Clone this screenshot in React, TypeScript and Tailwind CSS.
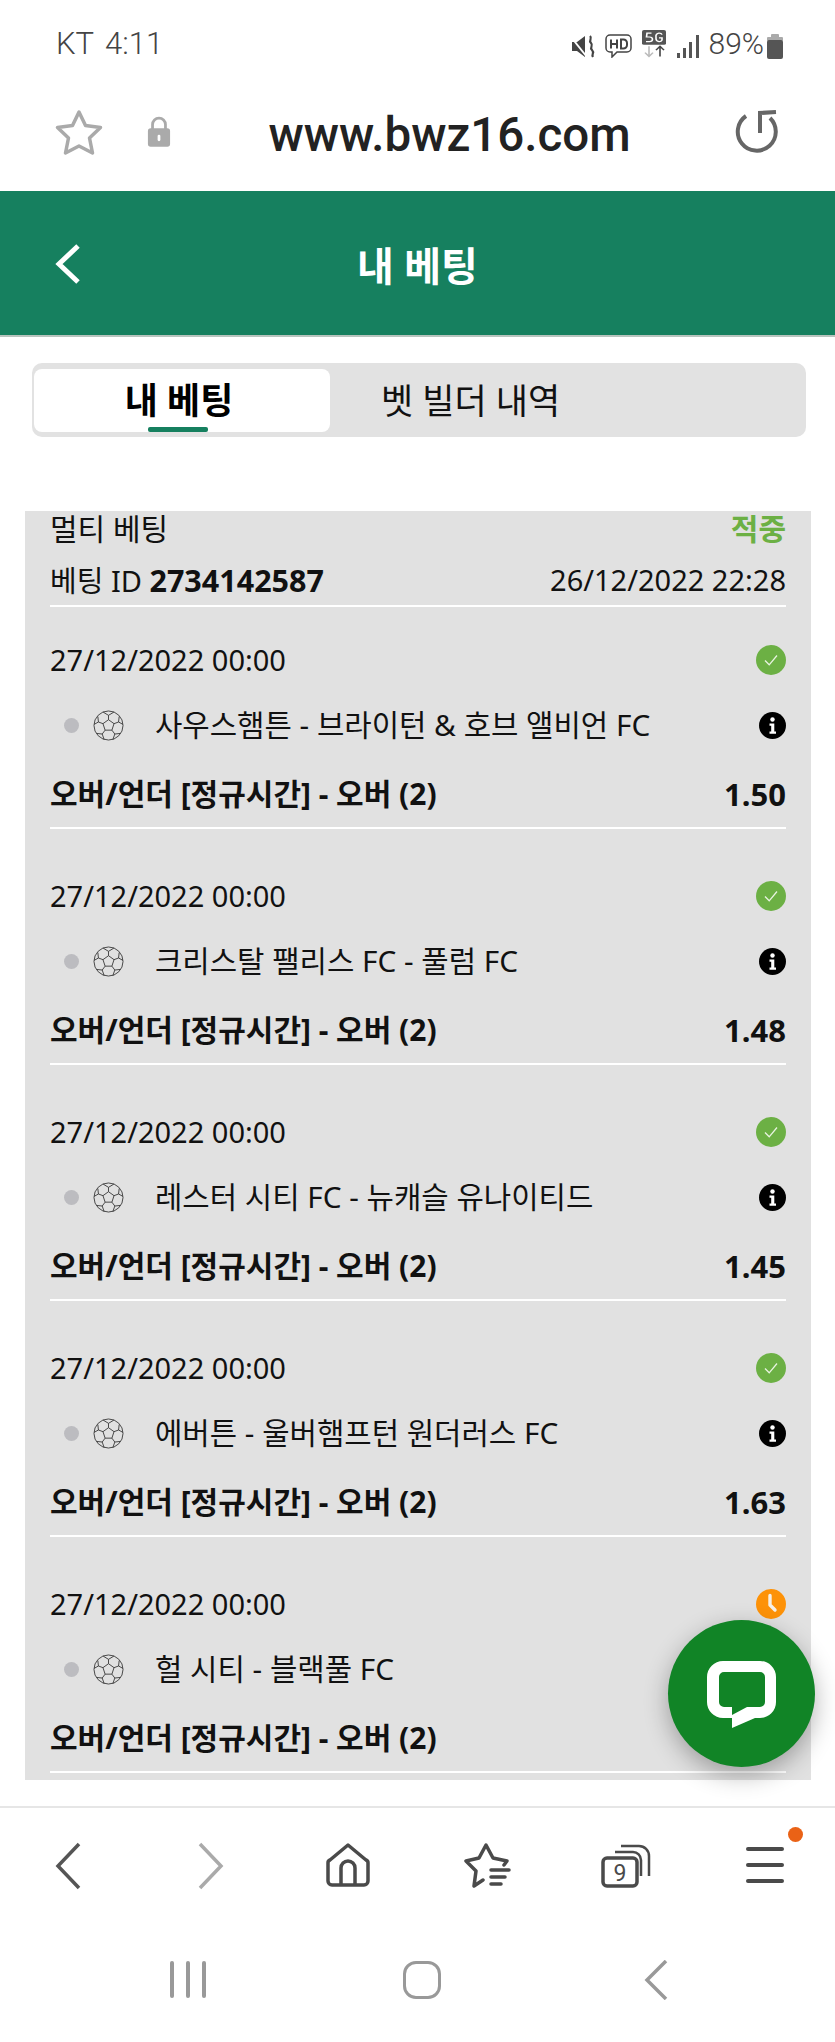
import React from 'react';

type Bet = { match: string; odds?: string; pending?: boolean };

const bets: Bet[] = [
    { match: '사우스햄튼 - 브라이턴 & 호브 앨비언 FC', odds: '1.50' },
    { match: '크리스탈 팰리스 FC - 풀럼 FC', odds: '1.48' },
    { match: '레스터 시티 FC - 뉴캐슬 유나이티드', odds: '1.45' },
    { match: '에버튼 - 울버햄프턴 원더러스 FC', odds: '1.63' },
    { match: '헐 시티 - 블랙풀 FC', pending: true },
];

function SoccerBall() {
    return (
        <svg className="w-[31px] h-[31px] shrink-0" viewBox="0 0 32 32" fill="none" stroke="#333" strokeWidth="0.9" strokeLinejoin="round">
            <circle cx="16" cy="16" r="15" />
            <path d="M16 10l5.700 4.100-2.200 6.700h-7l-2.200-6.700z" />
            <path d="M16 10V5.500M21.700 14.100l4.700-1.700M19.500 20.800l3 4M12.500 20.800l-3 4M10.300 14.100l-4.700-1.700" />
            <path d="M10.500 2.200L16 5.500l5.500-3.300M26.400 12.400l.6-5.600M26.400 12.400l4.400 2.400M22.500 24.800l5.800-.6M22.500 24.800l-2 5.800M9.500 24.800l2 5.800M9.500 24.800l-5.800-.6M5.600 12.400l-4.400 2.400M5.600 12.400L5 6.800" />
        </svg>
    );
}

function CheckBadge() {
    return (
        <svg className="w-[30px] h-[30px]" viewBox="0 0 30 30">
            <circle cx="15" cy="15" r="15" fill="#6cb044" />
            <path d="M9 15.500l4.200 4.300L21 10.500" fill="none" stroke="#e8f3e0" strokeWidth="1.300" />
        </svg>
    );
}

function ClockBadge() {
    return (
        <svg className="w-[30px] h-[30px]" viewBox="0 0 30 30">
            <circle cx="15" cy="15" r="15" fill="#fd9208" />
            <path d="M14 6.500v9.500l5 5" fill="none" stroke="#f6f0e6" strokeWidth="3.400" strokeLinecap="round" strokeLinejoin="round" />
        </svg>
    );
}

function InfoBadge() {
    return (
        <svg className="w-[27px] h-[27px]" viewBox="0 0 27 27">
            <circle cx="13.500" cy="13.500" r="13.500" fill="#000" />
            <circle cx="13.500" cy="7.500" r="2.200" fill="#fff" />
            <path d="M10.500 11.500h4.800v8h1.700v2.200h-6.500v-2.200h1.700v-5.800h-1.700z" fill="#fff" />
        </svg>
    );
}

function BetRow({ bet }: { bet: Bet }) {
    return (
        <div className="mb-[14px] last:mb-0 border-b-2 border-white pt-[33px] pb-[13px]">
            <div className="flex items-center justify-between h-[40px]">
                <span>27/12/2022 00:00</span>
                {bet.pending ? <ClockBadge /> : <CheckBadge />}
            </div>
            <div className="flex items-center h-[40px] mt-[25px]">
                <span className="w-[15px] h-[15px] rounded-full bg-[#bcbcc0] ml-[14px] mr-[14px] shrink-0"></span>
                <SoccerBall />
                <span className="ml-[31px] text-[29.75px]">{bet.match}</span>
                {!bet.pending && (
                    <span className="ml-auto flex">
                        <InfoBadge />
                    </span>
                )}
            </div>
            <div className="flex items-center justify-between h-[40px] mt-[29px] font-bold text-[30px]">
                <span>오버/언더 [정규시간] - 오버 (2)</span>
                {bet.odds && <span className="text-[31px]">{bet.odds}</span>}
            </div>
        </div>
    );
}

export default function App() {
    return (
        <div className="relative w-[835px] h-[2042px] bg-white overflow-hidden text-[29px] leading-[40px] text-[#111] font-['Noto_Sans','Noto_Sans_CJK_KR',sans-serif]">
            {/* status bar */}
            <div className="flex items-center justify-between h-[88px] pl-[56px] pr-[52px] text-[#444] font-['Roboto','Noto_Sans_CJK_KR',sans-serif] font-light">
                <span className="text-[31px] flex gap-[11px]">
                    <span>KT</span>
                    <span>4:11</span>
                </span>
                <div className="flex items-center gap-[10px] pt-[4px]">
                    <svg className="w-[24px] h-[23px]" viewBox="0 0 24 23" fill="#444">
                        <path d="M1 7h5l8-6v21l-8-6H1z" />
                        <path d="M0 2l16 20" stroke="#fff" strokeWidth="2" />
                        <path d="M19 1c3 3-2 4 1 7s-2 4 1 7-1 4 1 7" fill="none" stroke="#444" strokeWidth="2.200" />
                    </svg>
                    <svg className="w-[27px] h-[24px]" viewBox="0 0 27 24" fill="none" stroke="#444" strokeWidth="1.500">
                        <path d="M5 1h17a4 4 0 014 4v9a4 4 0 01-4 4H12l-5 5v-5H5a4 4 0 01-4-4V5a4 4 0 014-4z" />
                        <path d="M6 5.500v9M12 5.500v9M6 10h6M16 5.500v9h2.500a3.500 3.500 0 003.500-3.500V9a3.500 3.500 0 00-3.500-3.500z" strokeWidth="2" />
                    </svg>
                    <svg className="w-[25px] h-[28px] -mt-[4px]" viewBox="0 0 25 36" preserveAspectRatio="none">
                        <rect x="0" y="0" width="24" height="19" rx="2" fill="#555" />
                        <path d="M9.500 4H5l-.5 5h3a2 2 0 010 6H4M20 6a3 3 0 00-3-2 3.500 4 0 00-3 5v2a3.500 4 0 003 4 3 3 0 003-2v-3h-3" fill="none" stroke="#fff" strokeWidth="1.600" />
                        <path d="M7 21v13M3 29l4 5 4-5" fill="none" stroke="#bbb" strokeWidth="1.600" />
                        <path d="M18 34V21M14 26l4-5 4 5" fill="none" stroke="#444" strokeWidth="1.600" />
                    </svg>
                    <svg className="w-[22px] h-[23px]" viewBox="0 0 22 23" fill="#555">
                        <rect x="0" y="18" width="3" height="5" />
                        <rect x="6" y="13" width="3" height="10" />
                        <rect x="12" y="7" width="3" height="16" />
                        <rect x="19" y="0" width="3" height="23" />
                    </svg>
                    <div className="flex items-center gap-[3px]">
                        <span className="text-[30px] -mt-[4px]">89%</span>
                        <svg className="w-[16px] h-[25px]" viewBox="0 0 16 25">
                            <rect x="4" y="0" width="8" height="4" rx="1" fill="#aaa" />
                            <rect x="0" y="3" width="16" height="4" rx="1" fill="#aaa" />
                            <rect x="0" y="6" width="16" height="19" rx="2" fill="#555" />
                        </svg>
                    </div>
                </div>
            </div>

            {/* browser url bar */}
            <div className="relative flex items-center justify-center h-[103px] font-['Roboto',sans-serif] font-medium text-[47.5px] text-[#222]">
                <svg className="absolute left-[54px] top-[20px] w-[50px] h-[50px]" viewBox="0 0 50 50" fill="none" stroke="#aaa" strokeWidth="3.500" strokeLinejoin="round">
                    <path d="M25 4l6.500 13.500 15 2-11 10.500 3 15L25 38l-13.500 7 3-15-11-10.500 15-2z" />
                </svg>
                <svg className="absolute left-[147px] top-[28px] w-[24px] h-[31px]" viewBox="0 0 26 33">
                    <path d="M6 15V9a7 7 0 0114 0v6" fill="none" stroke="#aaa" strokeWidth="3" />
                    <rect x="1" y="13" width="24" height="20" rx="3" fill="#aaa" />
                    <rect x="11.500" y="20" width="3" height="7" rx="1.500" fill="#fff" />
                </svg>
                <span className="ml-[64px] -mt-[10px]">www.bwz16.com</span>
                <svg className="absolute right-[57px] top-[22px] w-[43px] h-[44px]" viewBox="0 0 43 44" fill="none" stroke="#666" strokeWidth="4">
                    <path d="M11 6a19 19 0 1024 2" />
                    <path d="M25 23V3l16-1" />
                </svg>
            </div>

            {/* page header */}
            <div className="relative flex items-center justify-center h-[146px] bg-[#16805f] border-b-2 border-[#b8c4be] text-white text-[40px] font-bold">
                <svg className="absolute left-[55px] top-[53px] w-[25px] h-[40px]" viewBox="0 0 25 40" fill="none" stroke="#fff" strokeWidth="5">
                    <path d="M23 2L4 20l19 18" />
                </svg>
                <span className="mt-[6px]">내 베팅</span>
            </div>

            {/* tabs */}
            <div className="flex ml-[32px] mr-[29px] mt-[26px] h-[74px] rounded-[10px] bg-[#e2e2e2] p-[2px] pt-[6px] pb-[5px]">
                <div className="relative flex items-center justify-center w-[296px] h-[63px] rounded-[8px] bg-white text-[36px] font-bold text-black">
                    <span className="-ml-[6px]">내 베팅</span>
                    <span className="absolute left-[114px] bottom-0 w-[60px] h-[5px] rounded-[2px] bg-[#16805f]"></span>
                </div>
                <div className="flex items-center pl-[51px] text-[35px] text-[#111]">벳 빌더 내역</div>
            </div>

            {/* bet card */}
            <div className="mx-[25px] mt-[74px] w-[786px] h-[1269px] bg-[#e1e1e1] px-[25px]">
                <div className="flex items-center justify-between h-[36px] leading-[36px] text-[30px]">
                    <span>멀티 베팅</span>
                    <span className="font-bold text-[#6cb044]">적중</span>
                </div>
                <div className="flex items-center justify-between h-[40px] mt-[13px]">
                    <span>
                        베팅 ID <span className="font-bold text-[30.5px]">2734142587</span>
                    </span>
                    <span>26/12/2022 22:28</span>
                </div>
                <div className="h-[2px] bg-white mt-[5px]"></div>
                {bets.map((bet) => (
                    <BetRow key={bet.match} bet={bet} />
                ))}
            </div>

            {/* live chat button */}
            <div className="absolute left-[668px] top-[1620px] flex items-center justify-center w-[147px] h-[147px] rounded-full bg-[#118426] shadow-[0_8px_24px_rgba(0,0,0,0.3)]">
                <svg className="w-[69px] h-[67px] mt-[2px]" viewBox="0 0 69 67">
                    <path
                        fillRule="evenodd"
                        fill="#fff"
                        d="M16 0h37a16 16 0 0116 16v25a16 16 0 01-16 16h-5L25 67V57h-9A16 16 0 010 41V16A16 16 0 0116 0zM17 11a5 5 0 00-5 5v25a5 5 0 005 5h8v8l15-8h13a5 5 0 005-5V16a5 5 0 00-5-5z"
                    />
                </svg>
            </div>

            {/* browser toolbar */}
            <div className="absolute left-0 top-[1806px] w-full h-[120px] border-t-2 border-[#e6e6e6]">
                <svg className="absolute left-[55px] top-[34px] w-[26px] h-[48px]" viewBox="0 0 26 48" fill="none" stroke="#555" strokeWidth="3.500">
                    <path d="M24 2L3 24l21 22" />
                </svg>
                <svg className="absolute left-[198px] top-[34px] w-[26px] h-[48px]" viewBox="0 0 26 48" fill="none" stroke="#aaa" strokeWidth="3.500">
                    <path d="M2 2l21 22L2 46" />
                </svg>
                <svg className="absolute left-[326px] top-[35px] w-[44px] h-[44px]" viewBox="0 0 44 44" fill="none" stroke="#4a4a4a" strokeWidth="3.500" strokeLinejoin="round">
                    <path d="M22 2L4 17a3 3 0 00-2 3v18a4 4 0 004 4h32a4 4 0 004-4V20a3 3 0 00-2-3z" />
                    <path d="M15 42V25a7 7 0 0114 0v17" />
                </svg>
                <svg className="absolute left-[464px] top-[35px] w-[47px] h-[45px]" viewBox="0 0 47 45" fill="none" stroke="#4a4a4a" strokeWidth="3.500" strokeLinejoin="round" strokeLinecap="round">
                    <path d="M19 37l-9 6 2-15L2 18l13-3 7-13 7 13 14 3-3 4" />
                    <path d="M27 27h18M27 34h14M27 41h10" />
                </svg>
                <svg className="absolute left-[601px] top-[36px] w-[50px] h-[44px]" viewBox="0 0 50 44" fill="none" stroke="#4a4a4a">
                    <rect x="2" y="14" width="34" height="28" rx="4" strokeWidth="3.500" />
                    <path d="M14 8h18a8 8 0 018 8v16" strokeWidth="2.500" />
                    <path d="M20 2h18a10 10 0 0110 10v20" strokeWidth="2.500" />
                    <text x="19" y="37" textAnchor="middle" fontSize="23" fill="#4a4a4a" stroke="none" fontFamily="Roboto, sans-serif">9</text>
                </svg>
                <div className="absolute left-[746px] top-[39px] w-[38px] flex flex-col gap-[12px]">
                    <span className="h-[4px] rounded-full bg-[#4a4a4a]"></span>
                    <span className="h-[4px] rounded-full bg-[#4a4a4a]"></span>
                    <span className="h-[4px] rounded-full bg-[#4a4a4a]"></span>
                </div>
                <span className="absolute left-[788px] top-[19px] w-[15px] h-[15px] rounded-full bg-[#ea6216]"></span>
            </div>

            {/* android nav */}
            <div className="absolute left-0 top-[1950px] w-full h-[60px]">
                <div className="absolute left-[170px] top-[11px] flex gap-[12px]">
                    <span className="w-[4px] h-[37px] rounded-full bg-[#999]"></span>
                    <span className="w-[4px] h-[37px] rounded-full bg-[#999]"></span>
                    <span className="w-[4px] h-[37px] rounded-full bg-[#999]"></span>
                </div>
                <span className="absolute left-[403px] top-[11px] w-[38px] h-[38px] rounded-[13px] border-[3.500px] border-[#999]"></span>
                <svg className="absolute left-[643px] top-[10px] w-[25px] h-[40px]" viewBox="0 0 25 40" fill="none" stroke="#999" strokeWidth="3.500">
                    <path d="M23 1L4 20l19 19" />
                </svg>
            </div>
        </div>
    );
}
